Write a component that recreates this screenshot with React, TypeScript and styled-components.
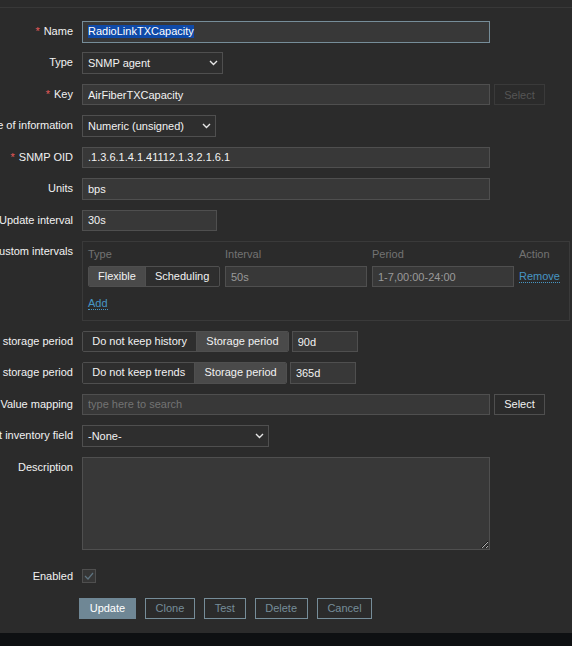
import React from 'react';
import styled, { createGlobalStyle } from 'styled-components';

const GlobalStyle = createGlobalStyle`
  html, body {
    margin: 0;
    padding: 0;
    background: #2b2b2b;
  }
  body {
    font-family: "Liberation Sans", Arial, sans-serif;
    font-size: 11px;
    color: #f2f2f2;
    overflow: hidden;
  }
`;

const H = 21.5;

const Page = styled.div`
  min-height: 100vh;
  box-sizing: border-box;
  display: flex;
  flex-direction: column;
  padding-top: 7px;
`;

const Form = styled.div`
  border-top: 1px solid #383838;
  padding: 13px 0 14px;
  display: flex;
  flex-direction: column;
`;

const Footer = styled.div`
  flex: 1;
  min-height: 30px;
  background: #0e1012;
`;

const Row = styled.div<{ $mb?: number; $center?: boolean }>`
  display: flex;
  align-items: ${p => (p.$center ? 'center' : 'flex-start')};
  gap: 9px;
  margin-bottom: ${p => p.$mb ?? 9.93}px;
`;

const Label = styled.div<{ $lh?: number }>`
  width: 73px;
  flex: none;
  display: flex;
  justify-content: flex-end;
  white-space: nowrap;
  line-height: ${p => p.$lh ?? H}px;
  color: #f2f2f2;
`;

const Req = styled.span`
  color: #e45959;
  margin-right: 4px;
`;

const Field = styled.div`
  display: flex;
  align-items: center;
  gap: 4px;
`;

const Input = styled.input<{ $w: number; $dim?: boolean }>`
  width: ${p => p.$w}px;
  height: ${H}px;
  box-sizing: border-box;
  margin: 0;
  padding: 0 5px;
  border: 1px solid #4f4f4f;
  background: #383838;
  color: ${p => (p.$dim ? '#9a9a9a' : '#f2f2f2')};
  font: inherit;
  outline: none;
  &::placeholder {
    color: #737373;
  }
`;

const FocusedBox = styled.div<{ $w: number }>`
  width: ${p => p.$w}px;
  height: ${H}px;
  box-sizing: border-box;
  padding: 0 5px;
  border: 1px solid #768d99;
  background: #383838;
  display: flex;
  align-items: center;
`;

const Selected = styled.span`
  background: #0f4aa8;
  color: #ffffff;
  line-height: 13px;
`;

const SelectBox = styled.div<{ $w: number }>`
  width: ${p => p.$w}px;
  height: ${H}px;
  box-sizing: border-box;
  padding: 0 4px 0 5px;
  border: 1px solid #4f4f4f;
  background: #2e2e2e;
  display: flex;
  align-items: center;
  justify-content: space-between;
  color: #f2f2f2;
`;

const SideButton = styled.button<{ $disabled?: boolean }>`
  width: 51px;
  height: ${H}px;
  margin: 0;
  padding: 0;
  box-sizing: border-box;
  font: inherit;
  background: #2b2b2b;
  border: 1px solid ${p => (p.$disabled ? '#3a3a3a' : '#4f4f4f')};
  color: ${p => (p.$disabled ? '#555555' : '#f2f2f2')};
`;

const Segments = styled.div`
  display: inline-flex;
  height: ${H}px;
  box-sizing: border-box;
  border: 1px solid #4f4f4f;
  border-radius: 2px;
  overflow: hidden;
`;

const Segment = styled.div<{ $on?: boolean; $px?: number }>`
  padding: 0 ${p => p.$px ?? 9.2}px;
  line-height: ${H - 2}px;
  white-space: nowrap;
  background: ${p => (p.$on ? '#4a4a4a' : '#2e2e2e')};
  color: #f2f2f2;
  & + & {
    border-left: 1px solid #4f4f4f;
  }
`;

const IntervalBox = styled.div`
  width: 488px;
  height: 80px;
  box-sizing: border-box;
  border: 1px solid #3a3a3a;
  padding: 4px 5px 8px;
`;

const IntervalGrid = styled.div`
  display: grid;
  grid-template-columns: 132px 142px 142px auto;
  column-gap: 5px;
  align-items: center;
`;

const Head = styled.div`
  color: #737373;
  line-height: 16px;
  margin-bottom: 4px;
`;

const Link = styled.a`
  color: #4796c4;
  text-decoration: none;
  border-bottom: 1px dotted #4796c4;
  line-height: 13px;
  cursor: pointer;
`;

const AddLine = styled.div`
  margin-top: 8px;
  line-height: 16px;
`;

const TextArea = styled.textarea`
  width: 408px;
  height: 93px;
  box-sizing: border-box;
  margin: 0;
  padding: 4px 5px;
  border: 1px solid #4f4f4f;
  background: #383838;
  color: #f2f2f2;
  font: inherit;
  resize: vertical;
  outline: none;
  display: block;
`;

const CheckBox = styled.span`
  width: 14px;
  height: 14px;
  box-sizing: border-box;
  border: 1px solid #4f4f4f;
  background: #363636;
  display: flex;
  align-items: center;
  justify-content: center;
`;

const Buttons = styled.div`
  display: flex;
  gap: 9px;
  margin-left: 79px;
`;

const Button = styled.button<{ $main?: boolean }>`
  height: 21px;
  margin: 0;
  padding: 0 9.7px;
  box-sizing: border-box;
  font: inherit;
  border: 1px solid ${p => (p.$main ? '#6f8795' : '#768d99')};
  background: ${p => (p.$main ? '#6f8795' : 'transparent')};
  color: ${p => (p.$main ? '#ffffff' : '#768d99')};
  border-radius: 0;
`;

const Chevron = () => (
  <svg width="9" height="6" viewBox="0 0 9 6" fill="none">
    <path d="M1 1l3.5 3.5L8 1" stroke="#e6e6e6" strokeWidth="1.4" />
  </svg>
);

const Select = ({ w, value }: { w: number; value: string }) => (
  <SelectBox $w={w}>
    <span>{value}</span>
    <Chevron />
  </SelectBox>
);

export default function App() {
  return (
    <Page>
      <GlobalStyle />
      <Form>
        <Row>
          <Label>
            <Req>*</Req>Name
          </Label>
          <FocusedBox $w={408} role="textbox">
            <Selected>RadioLinkTXCapacity</Selected>
          </FocusedBox>
        </Row>
        <Row>
          <Label>Type</Label>
          <Select w={141} value="SNMP agent" />
        </Row>
        <Row>
          <Label>
            <Req>*</Req>Key
          </Label>
          <Field>
            <Input $w={408} defaultValue="AirFiberTXCapacity" />
            <SideButton $disabled>Select</SideButton>
          </Field>
        </Row>
        <Row>
          <Label>Type of information</Label>
          <Select w={134} value="Numeric (unsigned)" />
        </Row>
        <Row>
          <Label>
            <Req>*</Req>SNMP OID
          </Label>
          <Input $w={408} defaultValue=".1.3.6.1.4.1.41112.1.3.2.1.6.1" />
        </Row>
        <Row>
          <Label>Units</Label>
          <Input $w={408} defaultValue="bps" />
        </Row>
        <Row>
          <Label>Update interval</Label>
          <Input $w={135} defaultValue="30s" />
        </Row>
        <Row>
          <Label>Custom intervals</Label>
          <IntervalBox>
            <IntervalGrid>
              <Head>Type</Head>
              <Head>Interval</Head>
              <Head>Period</Head>
              <Head>Action</Head>
              <Segments>
                <Segment $on $px={9}>Flexible</Segment>
                <Segment $px={9}>Scheduling</Segment>
              </Segments>
              <Input $w={142} $dim defaultValue="50s" />
              <Input $w={142} $dim defaultValue="1-7,00:00-24:00" />
              <div>
                <Link>Remove</Link>
              </div>
            </IntervalGrid>
            <AddLine>
              <Link>Add</Link>
            </AddLine>
          </IntervalBox>
        </Row>
        <Row>
          <Label>History storage period</Label>
          <Field>
            <Segments>
              <Segment>Do not keep history</Segment>
              <Segment $on>Storage period</Segment>
            </Segments>
            <Input $w={66} defaultValue="90d" style={{ marginLeft: -1 }} />
          </Field>
        </Row>
        <Row>
          <Label>Trend storage period</Label>
          <Field>
            <Segments>
              <Segment>Do not keep trends</Segment>
              <Segment $on>Storage period</Segment>
            </Segments>
            <Input $w={66} defaultValue="365d" style={{ marginLeft: -1 }} />
          </Field>
        </Row>
        <Row>
          <Label>Value mapping</Label>
          <Field>
            <Input $w={408} placeholder="type here to search" />
            <SideButton>Select</SideButton>
          </Field>
        </Row>
        <Row>
          <Label>Populates host inventory field</Label>
          <Select w={187} value="-None-" />
        </Row>
        <Row $mb={18}>
          <Label>Description</Label>
          <TextArea />
        </Row>
        <Row $mb={14} $center>
          <Label $lh={16}>Enabled</Label>
          <CheckBox>
            <svg width="10" height="8" viewBox="0 0 10 8" fill="none">
              <path d="M1 4l3 3 5-6" stroke="#5f7480" strokeWidth="1.2" />
            </svg>
          </CheckBox>
        </Row>
        <Buttons>
          <Button $main>Update</Button>
          <Button>Clone</Button>
          <Button>Test</Button>
          <Button>Delete</Button>
          <Button>Cancel</Button>
        </Buttons>
      </Form>
      <Footer />
    </Page>
  );
}
